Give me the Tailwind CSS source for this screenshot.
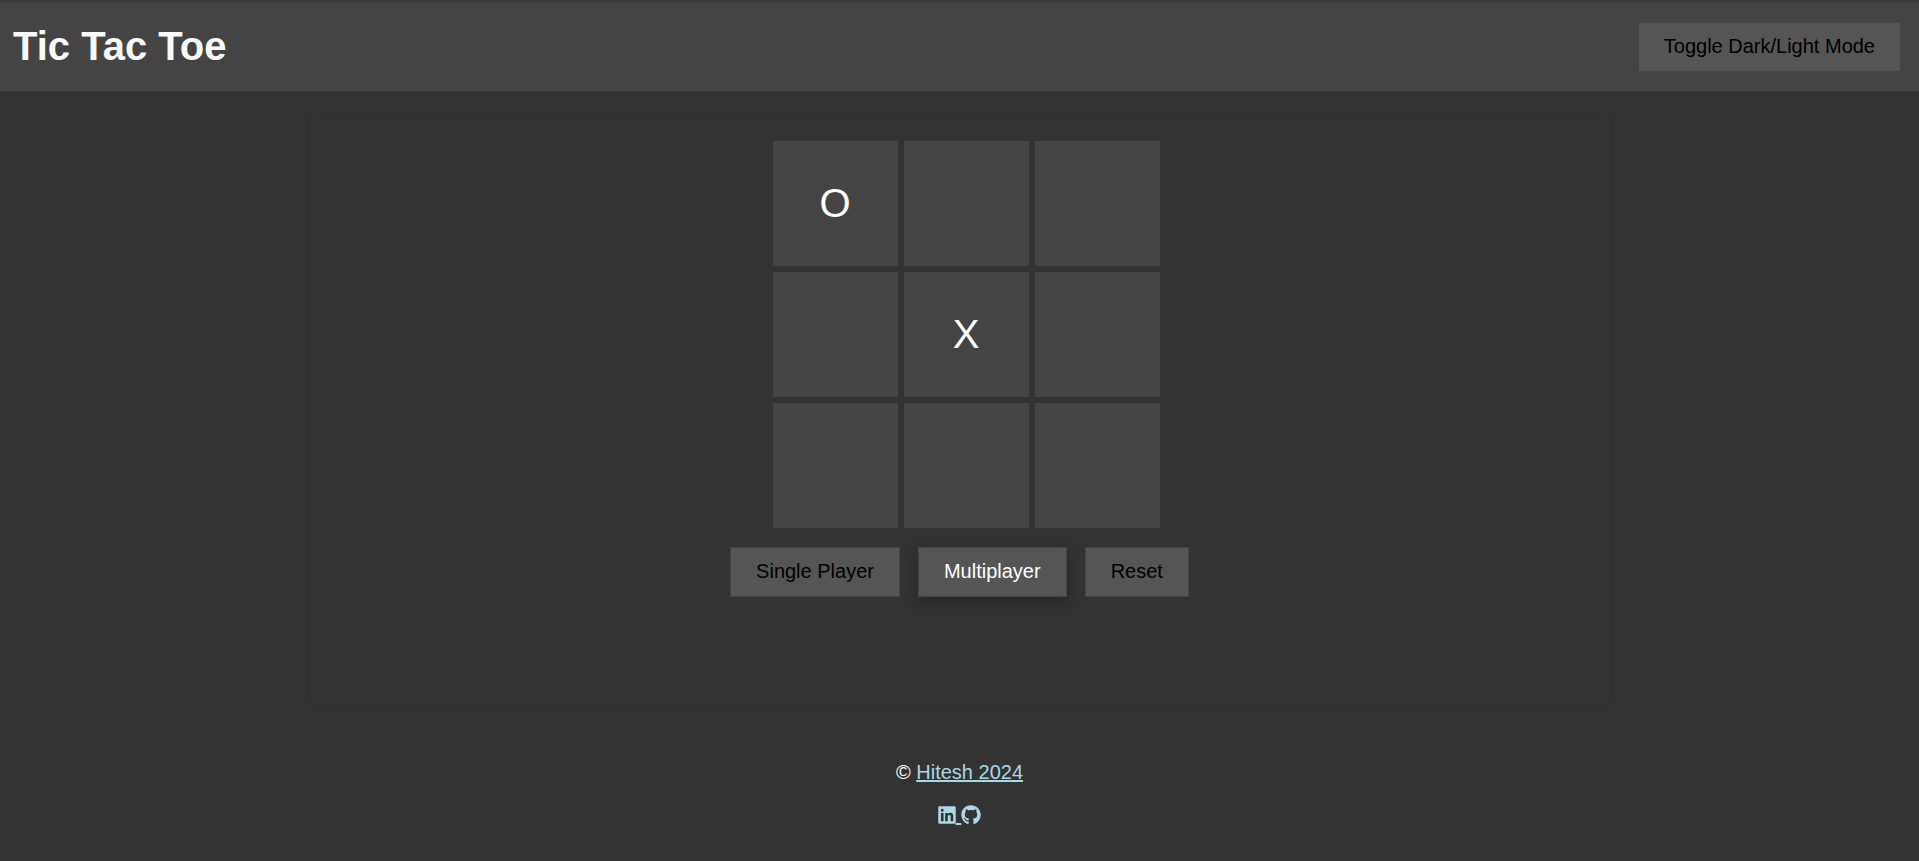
<!DOCTYPE html>
<html lang="en">
<head>
<meta charset="UTF-8">
<meta name="viewport" content="width=device-width, initial-scale=1">
<title>Tic Tac Toe</title>
<script src="https://cdn.jsdelivr.net/npm/@tailwindcss/browser@4"></script>
</head>
<body class="min-h-screen bg-[#333] border-t-3 border-[#3c3c3c] font-['Liberation_Sans',Arial,sans-serif] text-xl text-white">
  <header class="flex items-center justify-between bg-[#444] py-5 pr-[19px] pl-[13px]">
    <h1 class="pb-[2px] text-[40px] leading-[46px] font-bold text-[#f9f9f9]">Tic Tac Toe</h1>
    <button type="button" class="h-12 bg-[#555] px-[25px] pb-[2px] leading-6 text-black">Toggle Dark/Light Mode</button>
  </header>

  <main class="mx-auto mt-[25px] flex max-w-[1300px] flex-col items-center px-6 pt-[25px] pb-[106px] shadow-[0_0_10px_rgba(0,0,0,0.06)]">
    <div class="ml-[13px] grid grid-cols-3 gap-[6px] text-[40px] leading-none text-white">
      <button type="button" aria-label="Row 1, column 1: O" class="size-[125px] bg-[#444] pb-[2px]">O</button>
      <button type="button" aria-label="Row 1, column 2" class="size-[125px] bg-[#444]"></button>
      <button type="button" aria-label="Row 1, column 3" class="size-[125px] bg-[#444]"></button>
      <button type="button" aria-label="Row 2, column 1" class="size-[125px] bg-[#444]"></button>
      <button type="button" aria-label="Row 2, column 2: X" class="size-[125px] bg-[#444] pb-[2px]">X</button>
      <button type="button" aria-label="Row 2, column 3" class="size-[125px] bg-[#444]"></button>
      <button type="button" aria-label="Row 3, column 1" class="size-[125px] bg-[#444]"></button>
      <button type="button" aria-label="Row 3, column 2" class="size-[125px] bg-[#444]"></button>
      <button type="button" aria-label="Row 3, column 3" class="size-[125px] bg-[#444]"></button>
    </div>
    <div class="mt-[19px] flex flex-wrap justify-center gap-[18px]">
      <button type="button" class="h-[50px] border border-[#444] bg-[#555] px-[25px] pb-[2px] leading-6 text-black">Single Player</button>
      <button type="button" aria-pressed="true" class="h-[50px] border border-[#444] bg-[#555] px-[25px] pb-[2px] leading-6 text-white shadow-[0_5px_15px_rgba(0,0,0,0.3)]">Multiplayer</button>
      <button type="button" class="h-[50px] border border-[#444] bg-[#555] px-[25px] pb-[2px] leading-6 text-black">Reset</button>
    </div>
  </main>

  <footer class="mt-[57px] text-center leading-6">
    <p>© <a href="#" class="text-[#add8e6] underline">Hitesh 2024</a></p>
    <p class="mt-[19px] text-[#add8e6]"><a href="#" aria-label="LinkedIn" class="underline"><svg class="inline h-5 w-[18px] align-[-3px]" viewBox="0 0 448 512" fill="currentColor" aria-hidden="true"><path d="M416 32H31.9C14.3 32 0 46.5 0 64.3v383.4C0 465.5 14.3 480 31.9 480H416c17.6 0 32-14.5 32-32.3V64.3c0-17.8-14.4-32.3-32-32.3zM135.4 416H69V202.2h66.5V416zm-33.2-243c-21.3 0-38.5-17.3-38.5-38.5S80.9 96 102.2 96c21.2 0 38.5 17.3 38.5 38.5 0 21.3-17.2 38.5-38.5 38.5zm282.1 243h-66.4V312c0-24.8-.5-56.7-34.5-56.7-34.6 0-39.9 27-39.9 54.9V416h-66.4V202.2h63.7v29.2h.9c8.9-16.8 30.6-34.5 62.9-34.5 67.2 0 79.7 44.3 79.7 101.9V416z"/></svg> </a><a href="#" aria-label="GitHub"><svg class="inline size-5 align-[-3px]" viewBox="0 0 496 512" fill="currentColor" aria-hidden="true"><path d="M165.900 397.400c0 2-2.300 3.600-5.200 3.600-3.300.3-5.600-1.300-5.600-3.600 0-2 2.300-3.600 5.200-3.600 3-.3 5.600 1.300 5.600 3.600zm-31.100-4.500c-.7 2 1.300 4.300 4.300 4.900 2.600 1 5.600 0 6.200-2s-1.300-4.300-4.300-5.200c-2.600-.7-5.500.3-6.200 2.300zm44.200-1.700c-2.900.7-4.900 2.600-4.600 4.900.3 2 2.900 3.300 5.900 2.600 2.900-.7 4.900-2.600 4.600-4.600-.3-1.900-3-3.200-5.900-2.900zM244.800 8C106.100 8 0 113.300 0 252c0 110.900 69.800 205.800 169.500 239.200 12.800 2.300 17.300-5.600 17.300-12.100 0-6.200-.3-40.400-.3-61.400 0 0-70 15-84.700-29.800 0 0-11.400-29.100-27.800-36.600 0 0-22.900-15.700 1.600-15.400 0 0 24.900 2 38.600 25.800 21.900 38.600 58.600 27.500 72.900 20.900 2.300-16 8.800-27.100 16-33.700-55.900-6.200-112.300-14.300-112.300-110.500 0-27.500 7.600-41.300 23.600-58.900-2.600-6.500-11.100-33.300 2.600-67.900 20.900-6.500 69 27 69 27 20-5.600 41.500-8.500 62.800-8.500s42.800 2.900 62.800 8.500c0 0 48.100-33.600 69-27 13.700 34.700 5.200 61.400 2.600 67.900 16 17.700 25.800 31.500 25.800 58.900 0 96.500-58.900 104.200-114.800 110.500 9.200 7.900 17 22.900 17 46.400 0 33.700-.3 75.400-.3 83.600 0 6.500 4.600 14.400 17.300 12.100C428.200 457.800 496 362.900 496 252 496 113.300 383.500 8 244.800 8zM97.200 352.900c-1.300 1-1 3.300.7 5.200 1.600 1.600 3.900 2.300 5.200 1 1.300-1 1-3.300-.7-5.200-1.600-1.600-3.900-2.300-5.200-1zm-10.800-8.100c-.7 1.300.3 2.900 2.300 3.900 1.600 1 3.600.7 4.300-.7.7-1.300-.3-2.900-2.300-3.900-2-.6-3.600-.3-4.300.7zm32.400 35.600c-1.600 1.300-1 4.300 1.300 6.200 2.300 2.300 5.200 2.600 6.500 1 1.300-1.300.7-4.300-1.300-6.200-2.200-2.300-5.200-2.600-6.500-1zm-11.400-14.700c-1.600 1-1.600 3.600 0 5.900 1.600 2.300 4.300 3.300 5.600 2.300 1.600-1.300 1.600-3.900 0-6.200-1.400-2.300-4-3.300-5.600-2z"/></svg></a></p>
  </footer>
</body>
</html>
